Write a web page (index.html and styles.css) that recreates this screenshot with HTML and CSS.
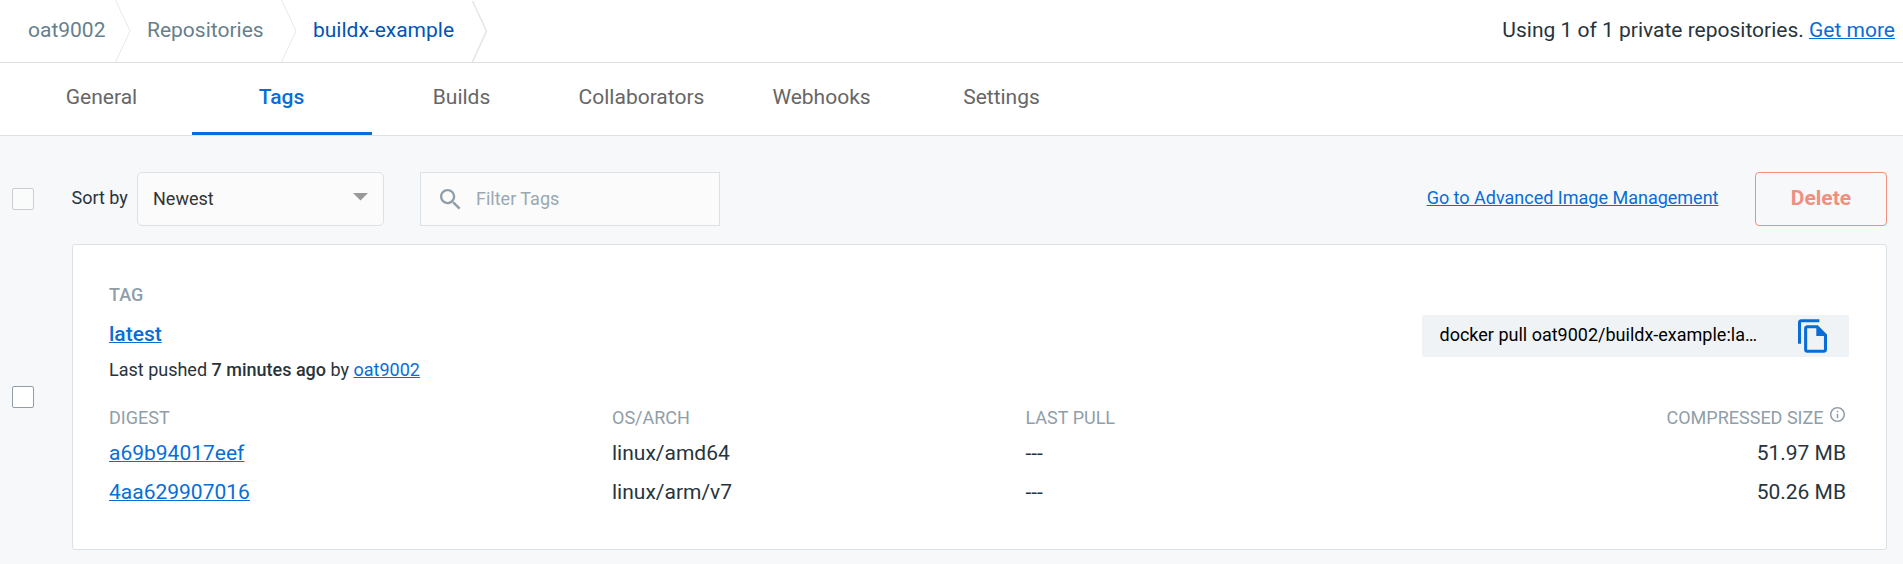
FILE: index.html
```html
<!DOCTYPE html>
<html lang="en">
<head>
<meta charset="utf-8">
<title>oat9002/buildx-example - Tags</title>
<link rel="stylesheet" href="styles.css">
</head>
<body>
<header class="topbar">
  <nav class="breadcrumb">
    <a class="crumb crumb-user">oat9002</a>
    <svg class="chevron" viewBox="0 0 16 62"><path d="M.5 0 15 31 .5 62"/></svg>
    <a class="crumb crumb-repos">Repositories</a>
    <svg class="chevron" viewBox="0 0 16 62"><path d="M.5 0 15 31 .5 62"/></svg>
    <a class="crumb crumb-current">buildx-example</a>
    <svg class="chevron chevron-last" viewBox="0 0 16 62"><path d="M.5 1 14.5 31 .5 62"/></svg>
  </nav>
  <p class="usage">Using 1 of 1 private repositories. <a class="link">Get more</a></p>
</header>
<nav class="tabs">
  <a class="tab">General</a>
  <a class="tab tab-active">Tags</a>
  <a class="tab">Builds</a>
  <a class="tab">Collaborators</a>
  <a class="tab">Webhooks</a>
  <a class="tab">Settings</a>
</nav>
<main class="content">
  <div class="toolbar">
    <span class="checkbox checkbox-muted"></span>
    <span class="sort-label">Sort by</span>
    <div class="select"><span>Newest</span><svg class="caret" viewBox="0 0 15 8"><path d="M0 0h15L7.5 7.5z"/></svg></div>
    <div class="filter">
      <svg class="search" viewBox="3 3 17.5 17.5"><path d="M15.5 14h-.79l-.28-.27C15.41 12.59 16 11.11 16 9.5 16 5.91 13.09 3 9.5 3S3 5.91 3 9.5 5.91 16 9.5 16c1.61 0 3.09-.59 4.23-1.57l.27.28v.79l5 4.99L20.49 19l-4.99-5zm-6 0C7.01 14 5 11.99 5 9.5S7.01 5 9.5 5 14 7.01 14 9.5 11.99 14 9.5 14z"/></svg>
      <span>Filter Tags</span>
    </div>
    <a class="link advanced">Go to Advanced Image Management</a>
    <button class="delete">Delete</button>
  </div>
  <div class="tag-row">
    <span class="checkbox"></span>
    <section class="card">
      <div class="card-head">
        <div>
          <div class="label tag-label">TAG</div>
          <div class="tag-name"><a class="link">latest</a></div>
          <div class="pushed">Last pushed <b>7 minutes ago</b> by <a class="link">oat9002</a></div>
        </div>
        <div class="pull">
          <span class="pull-text">docker pull oat9002/buildx-example:la…</span>
          <svg class="copy" viewBox="2 1 19 22"><path d="M16 1H4c-1.100 0-2 .9-2 2v14h2V3h12V1zm-1 4l6 6v10c0 1.100-.9 2-2 2H8c-1.100 0-2-.9-2-2V7c0-1.100.9-2 2-2h7zM8 7v14h11v-9h-5V7H8z" fill-rule="evenodd"/></svg>
        </div>
      </div>
      <div class="grid">
        <span class="label">DIGEST</span><span class="label">OS/ARCH</span><span class="label">LAST PULL</span>
        <span class="label size-label">COMPRESSED SIZE<svg class="info" viewBox="2 2 20 20"><path d="M11 7h2v2h-2zm0 4h2v6h-2zm1-9C6.480 2 2 6.480 2 12s4.480 10 10 10 10-4.480 10-10S17.520 2 12 2zm0 18c-4.410 0-8-3.590-8-8s3.590-8 8-8 8 3.590 8 8-3.590 8-8 8z"/></svg></span>
        <a class="link">a69b94017eef</a><span>linux/amd64</span><span>---</span><span class="size">51.97 MB</span>
        <a class="link">4aa629907016</a><span>linux/arm/v7</span><span>---</span><span class="size">50.26 MB</span>
      </div>
    </section>
  </div>
</main>
</body>
</html>
```
FILE: styles.css
```css
* { box-sizing: border-box; }
body {
  margin: 0;
  height: 564px;
  overflow: hidden;
  background: #f7f8fa;
  color: #27343c;
  font-family: Roboto, "Liberation Sans", sans-serif;
  font-size: 18px;
}
svg { display: block; flex: none; }
.link {
  color: #086dd7;
  text-decoration: underline;
  text-decoration-thickness: 1px;
  text-underline-offset: 1px;
}

.topbar {
  display: flex;
  justify-content: space-between;
  height: 63px;
  background: #fff;
  border-bottom: 1px solid #dfe1e4;
  font-size: 21px;
  line-height: 60px;
}
.breadcrumb { display: flex; padding-left: 28px; }
.crumb { color: #677f8d; white-space: nowrap; }
.crumb-user { width: 87px; }
.crumb-repos { width: 134px; margin-left: 16px; }
.crumb-current { width: 159px; margin-left: 16px; color: #0055b8; }
.chevron { width: 16px; height: 62px; fill: none; stroke: #e6e8ea; stroke-width: 1; }
.chevron-last { stroke: #e4e5e6; stroke-width: 1.5; }
.usage { margin: 0 8px 0 0; white-space: nowrap; }

.tabs {
  display: flex;
  height: 73px;
  padding-left: 12px;
  background: #fff;
  border-bottom: 1px solid #dfe1e4;
}
.tab {
  width: 180px;
  height: 72px;
  padding-right: 1px;
  color: #666;
  font-size: 21px;
  line-height: 68px;
  text-align: center;
}
.tab-active { color: #086dd7; font-weight: 500; border-bottom: 3px solid #086dd7; }

.content { padding: 36px 16px 0 12px; }
.toolbar { display: flex; align-items: center; height: 54px; }
.checkbox {
  flex: none;
  width: 22px;
  height: 22px;
  border: 1px solid #8f9ea8;
  border-radius: 2px;
  background: #fff;
}
.checkbox-muted { border-color: #c8cfd5; background: #fafbfb; }
.sort-label { width: 65.5px; margin-left: 37.5px; line-height: 52px; padding-bottom: 2px; white-space: nowrap; }
.select {
  display: flex;
  justify-content: space-between;
  width: 247px;
  height: 54px;
  padding: 0 15px;
  border: 1px solid #dce1e6;
  border-radius: 5px;
  background: #fbfbfb;
  color: #333;
  line-height: 52px;
}
.caret { width: 15px; height: 8px; margin-top: 20px; fill: #999; }
.filter {
  display: flex;
  width: 300px;
  height: 54px;
  margin-left: 36px;
  padding-left: 19px;
  border: 1px solid #dce1e6;
  background: #fbfbfb;
  color: #9aa8b2;
  line-height: 52px;
}
.search { width: 20.5px; height: 20.5px; margin: 16px 15.5px 0 0; fill: #8f9ea8; }
.advanced { margin-left: auto; padding-bottom: 3px; }
.delete {
  width: 132px;
  height: 54px;
  margin-left: 36.5px;
  padding: 0 0 3px;
  border: 1px solid #ef8f7e;
  border-radius: 4px;
  background: transparent;
  color: #ef8f7e;
  font: 700 21px Roboto, sans-serif;
}

.tag-row { display: flex; align-items: center; margin-top: 18px; }
.card {
  width: 1815px;
  height: 306px;
  margin-left: 38px;
  padding: 38px 37px 0 36px;
  border: 1px solid #dce1e6;
  border-radius: 3px;
  background: #fff;
}
.card-head { display: flex; justify-content: space-between; }
.label { color: #8f9ea8; font-size: 18px; line-height: 24px; }
.tag-label { font-weight: 500; }
.tag-name { margin-top: 12px; font-size: 21px; line-height: 30px; font-weight: 500; }
.pushed { margin-top: 9px; line-height: 24px; }
.pushed b { font-weight: 500; }
.pull {
  display: flex;
  width: 427px;
  height: 42px;
  margin-top: 32px;
  padding-left: 17.5px;
  border-radius: 3px;
  background: #eff3f6;
  color: #000;
  line-height: 40px;
}
.pull-text { width: 358.5px; white-space: nowrap; }
.copy { width: 29px; height: 34px; margin-top: 4px; fill: #086dd7; }
.grid {
  display: grid;
  grid-template-columns: 503px 413.5px 1fr auto;
  grid-template-rows: 28px 39px 39px;
  margin-top: 24px;
  padding-right: 3px;
  font-size: 21px;
  line-height: 39px;
}
.size-label { display: flex; }
.info { width: 15px; height: 15px; margin: 1px 1.5px 0 6px; fill: #8f9ea8; }
.size { text-align: right; }
```
